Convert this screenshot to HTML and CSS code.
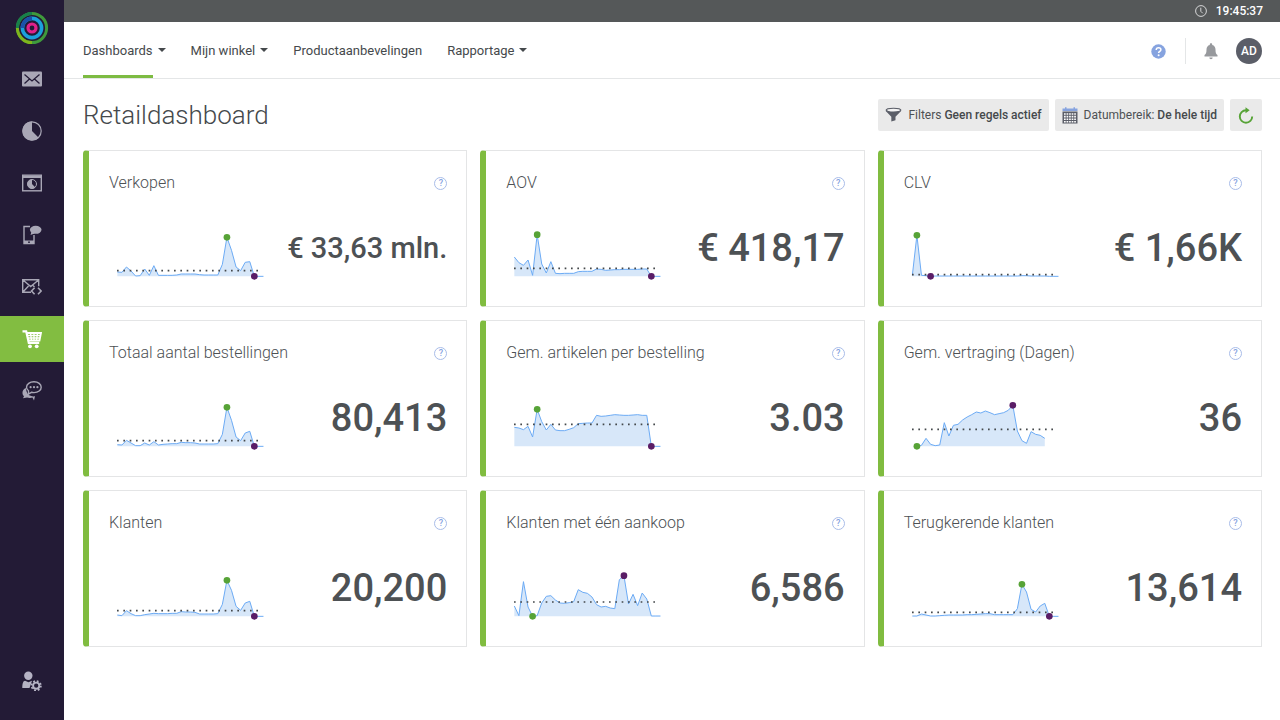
FILE: index.html
```html
<!DOCTYPE html>
<html lang="nl">
<head>
<meta charset="utf-8">
<title>Retaildashboard</title>
<link rel="stylesheet" href="styles.css">
</head>
<body>
<div class="app">
  <aside class="sidebar">
    <a class="logo" href="#" aria-label="Home">
      <svg width="34" height="34" viewBox="0 0 34 34" fill="none">
        <circle cx="17" cy="17" r="14.6" stroke="#3f9a3c" stroke-width="3"/>
        <path d="M2.4 17A14.6 14.6 0 0 1 17 2.4" stroke="#17804a" stroke-width="3"/>
        <path d="M2.4 17A14.6 14.6 0 0 0 17 31.6" stroke="#7fb51c" stroke-width="3"/>
        <circle cx="17" cy="17" r="9.6" stroke="#1ba0dc" stroke-width="3.6"/>
        <path d="M7.4 17A9.6 9.6 0 0 1 17 7.4" stroke="#1c51a8" stroke-width="3.6"/>
        <circle cx="17" cy="17" r="4" stroke="#e0218a" stroke-width="3.2"/>
      </svg>
    </a>
    <nav class="side-nav" aria-label="Hoofdmenu">
      <a class="side-link" href="#" aria-label="E-mail">
        <svg width="20" height="20" viewBox="0 0 20 20"><rect y="2.5" width="20" height="15" rx="1" fill="#a9a7b6"/><path d="M2.5 5.5l7.5 6.5 7.5-6.5M2.5 14.5l5-4.5M17.5 14.5l-5-4.5" stroke="#231b36" stroke-width="1.3" fill="none"/></svg>
      </a>
      <a class="side-link" href="#" aria-label="Analyse">
        <svg width="20" height="20" viewBox="0 0 20 20"><circle cx="10" cy="10" r="9.2" fill="none" stroke="#a9a7b6" stroke-width="1.2"/><path d="M10 10V.5A9.5 9.5 0 1 0 16.7 16.7z" fill="#a9a7b6"/></svg>
      </a>
      <a class="side-link" href="#" aria-label="Web">
        <svg width="20" height="20" viewBox="0 0 20 20" fill="none" stroke="#a9a7b6"><rect x=".7" y="2.2" width="18.6" height="15.6" stroke-width="1.4"/><path d="M1 4h18" stroke-width="2"/><circle cx="10" cy="11" r="4.5"/><path d="M10 11V6.2a4.8 4.8 0 1 0 3.4 8.2z" fill="#a9a7b6" stroke="none"/></svg>
      </a>
      <a class="side-link" href="#" aria-label="Mobiel">
        <svg width="20" height="20" viewBox="0 0 20 20"><path d="M8 1.5H2v17h10V10" fill="none" stroke="#a9a7b6" stroke-width="1.4"/><path d="M2 15.5h10V19H2z" fill="#a9a7b6"/><circle cx="7" cy="17.2" r=".9" fill="#231b36"/><ellipse cx="13.7" cy="4.8" rx="5.8" ry="4" fill="#a9a7b6"/><path d="M9.5 6.5l-1 3.5 4-1.5z" fill="#a9a7b6"/></svg>
      </a>
      <a class="side-link" href="#" aria-label="Transactionele e-mail">
        <svg width="20" height="20" viewBox="0 0 20 20" fill="none" stroke="#a9a7b6" stroke-width="1.4"><path d="M9 15.3H.7V2.7h16v6.5M1 3l7.7 6.5L16.500 3M1 15l5.500-6M11 8.500l1.500 1.500"/><path d="M12.600 10.700L9.500 14l3.100 3.300M16 10.700l3.100 3.300-3.100 3.300" stroke-width="1.6"/></svg>
      </a>
      <a class="side-link active" href="#" aria-label="Winkel" aria-current="page">
        <svg width="20" height="20" viewBox="0 0 20 20" fill="none" stroke="#fff"><path d="M.5 2.3h3.700l2.600 11.500h10.400" stroke-width="2.2"/><path d="M4.700 4H19l-1.500 7.500H6.500" stroke-width="1.8"/><path d="M5.500 6.500h13M6 9h12M8.500 4l1 7.500M12 4v7.500M15.500 4l-1 7.500" stroke-width="1.4"/><circle cx="8" cy="17.3" r="1.9" fill="#fff" stroke="none"/><circle cx="14.7" cy="17.3" r="1.9" fill="#fff" stroke="none"/></svg>
      </a>
      <a class="side-link" href="#" aria-label="Gesprekken">
        <svg width="20" height="20" viewBox="0 0 20 20"><path d="M4 7C0 8.500-.5 13 2 15.300L1 17.300l4-.8c2 .6 4 .5 5.500 0l1.500 3 1-4.200c-5 .7-9-2.500-9-8.300z" fill="#a9a7b6"/><path d="M12 .8c4.200 0 7.200 2.300 7.200 5.400s-3 5.400-7.200 5.400c-.9 0-1.700-.1-2.500-.3L6.500 13V9.800C5.200 8.800 4.500 7.600 4.500 6.200 4.500 3.100 7.800.8 12 .8z" fill="#231b36" stroke="#a9a7b6" stroke-width="1.4"/><circle cx="8.6" cy="6.2" r="1.1" fill="#a9a7b6"/><circle cx="12" cy="6.2" r="1.1" fill="#a9a7b6"/><circle cx="15.4" cy="6.2" r="1.1" fill="#a9a7b6"/></svg>
      </a>
    </nav>
    <a class="side-link settings" href="#" aria-label="Accountinstellingen">
      <svg width="20" height="20" viewBox="0 0 20 20"><circle cx="6.3" cy="4.8" r="4.2" fill="#b5b3c4"/><path d="M.3 17c0-5 1-7 2.700-7.300l3.500 1.500 3.500-1.500-2.500 7.300z" fill="#b5b3c4"/><circle cx="14.2" cy="14.7" r="3.1" fill="none" stroke="#b5b3c4" stroke-width="1.9"/><circle cx="14.2" cy="14.7" r="4.7" fill="none" stroke="#b5b3c4" stroke-width="1.7" stroke-dasharray="1.85 1.85"/></svg>
    </a>
  </aside>

  <div class="page">
    <div class="status-bar">
      <svg width="12" height="12" viewBox="0 0 12 12" fill="none" stroke="#d5d6d7"><circle cx="6" cy="6" r="5.4"/><path d="M5.800 2.700v3.600l2 2"/></svg>
      <time>19:45:37</time>
    </div>
    <header class="header">
      <nav class="tabs" aria-label="Winkelmenu">
        <a class="tab" href="#" aria-current="page"><span class="tab-label">Dashboards</span><span class="caret"></span></a>
        <a class="tab" href="#"><span class="tab-label">Mijn winkel</span><span class="caret"></span></a>
        <a class="tab" href="#"><span class="tab-label">Productaanbevelingen</span></a>
        <a class="tab" href="#"><span class="tab-label">Rapportage</span><span class="caret"></span></a>
      </nav>
      <div class="tools">
        <button class="tool help-tool" type="button" aria-label="Help">
          <svg width="15" height="15" viewBox="0 0 15 15"><circle cx="7.5" cy="7.5" r="7.2" fill="#86a3df"/><path d="M5.200 5.900c0-1.300 1-2.200 2.400-2.200S9.900 4.500 9.900 5.700c0 1.600-2.300 1.700-2.300 3.300" fill="none" stroke="#fff" stroke-width="1.5"/><circle cx="7.6" cy="11.2" r="1" fill="#fff"/></svg>
        </button>
        <button class="tool" type="button" aria-label="Meldingen">
          <svg width="14" height="17" viewBox="0 0 14 17" fill="#97999d"><path d="M7 .3c.8 0 1.200.5 1.200 1.200v.4c2.200.5 3.300 2.300 3.300 4.600 0 3.500.6 4.500 2 5.600v1.400H.5v-1.400c1.400-1.100 2-2.100 2-5.600 0-2.300 1.100-4.100 3.300-4.600v-.4C5.800.8 6.200.3 7 .3z"/><path d="M5.300 14.500h3.400a1.700 1.700 0 0 1-3.400 0z"/></svg>
        </button>
        <button class="avatar" type="button">AD</button>
      </div>
    </header>

    <main class="main">
      <div class="title-row">
        <h1 class="title">Retaildashboard</h1>
        <div class="actions">
          <button class="action" type="button">
            <svg width="17" height="16" viewBox="0 0 18 16"><path d="M.5 3.500l6.200 6.300V15l4.400-1.500V9.800l6.200-6.300z" fill="#5b5e68"/><ellipse cx="9" cy="2.8" rx="7.8" ry="2" fill="#f4f4f4" stroke="#5b5e68" stroke-width="1.2"/></svg>
            <span>Filters <b>Geen regels actief</b></span>
          </button>
          <button class="action" type="button">
            <svg width="16" height="17" viewBox="0 0 16 17"><path d="M.5 1.500h15V4H.5zM3 .3h1.500V3H3zM11.500.3H13V3h-1.500z" fill="#86a3df"/><rect x=".5" y="4.5" width="15" height="12" fill="#5b5e68"/><path d="M2 7h12M2 9.600h12M2 12.200h12M2 14.700h12" stroke="#fff" stroke-width="1.6" stroke-dasharray="1.7 .85"/></svg>
            <span>Datumbereik: <b>De hele tijd</b></span>
          </button>
          <button class="action refresh" type="button" aria-label="Vernieuwen">
            <svg width="16" height="17" viewBox="0 0 16 17"><path d="M9.500 3.300H8a6.200 6.200 0 1 0 6.200 6.200" fill="none" stroke="#57a337" stroke-width="1.9"/><path d="M7.500.3l4.200 3-4.200 3z" fill="#57a337"/></svg>
          </button>
        </div>
      </div>

      <section class="cards">
        <article class="card">
          <div class="card-head"><h2 class="card-title">Verkopen</h2><button class="hint" type="button" aria-label="Uitleg Verkopen">?</button></div>
          <div class="card-body">
            <svg class="spark" viewBox="0 0 450 156" data-values="13 12 28 16 1 2 22 3 32 3 3 3 3 4 7 7 7 7 5 4 4 4 4 36 117 78 28 17 42 44 0 0 0" data-average="17" data-green="24" data-purple="30"></svg>
            <p class="figure long">€ 33,63 mln.</p>
          </div>
        </article>
        <article class="card">
          <div class="card-head"><h2 class="card-title">AOV</h2><button class="hint" type="button" aria-label="Uitleg AOV">?</button></div>
          <div class="card-body">
            <svg class="spark" viewBox="0 0 450 156" data-values="58 41 33 49 3 125 37 10 44 9 8 9 9 9 14 15 15 15 22 21 18 19 20 20 21 21 21 21 22 22 0 0 0" data-average="24" data-green="5" data-purple="30"></svg>
            <p class="figure">€ 418,17</p>
          </div>
        </article>
        <article class="card">
          <div class="card-head"><h2 class="card-title">CLV</h2><button class="hint" type="button" aria-label="Uitleg CLV">?</button></div>
          <div class="card-body">
            <svg class="spark" viewBox="0 0 450 156" data-values="3 123 3 2 0 1 1 1 1 1 1 1 1 1 1 1 1 1 1 1 1 1 1 1 2 2 1 1 1 1 0 0 0" data-average="5" data-green="1" data-purple="4"></svg>
            <p class="figure">€ 1,66K</p>
          </div>
        </article>
        <article class="card">
          <div class="card-head"><h2 class="card-title">Totaal aantal bestellingen</h2><button class="hint" type="button" aria-label="Uitleg Totaal aantal bestellingen">?</button></div>
          <div class="card-body">
            <svg class="spark" viewBox="0 0 450 156" data-values="5 4 18 10 2 2 10 4 14 4 6 7 8 8 12 11 11 10 7 7 7 7 8 36 117 78 28 17 40 45 0 0 0" data-average="17" data-green="24" data-purple="30"></svg>
            <p class="figure">80,413</p>
          </div>
        </article>
        <article class="card">
          <div class="card-head"><h2 class="card-title">Gem. artikelen per bestelling</h2><button class="hint" type="button" aria-label="Uitleg Gem. artikelen per bestelling">?</button></div>
          <div class="card-body">
            <svg class="spark" viewBox="0 0 450 156" data-values="57 55 50 60 28 111 74 49 66 49 47 47 51 56 68 69 70 70 93 90 91 93 95 94 93 93 94 95 93 93 0 0 0" data-average="66" data-green="5" data-purple="30"></svg>
            <p class="figure">3.03</p>
          </div>
        </article>
        <article class="card">
          <div class="card-head"><h2 class="card-title">Gem. vertraging (Dagen)</h2><button class="hint" type="button" aria-label="Uitleg Gem. vertraging (Dagen)">?</button></div>
          <div class="card-body">
            <svg class="spark" viewBox="0 0 450 156" data-values="0 0 3 24 6 2 4 71 31 63 66 79 88 95 103 100 106 101 95 98 101 108 123 46 17 9 44 36 33 24" data-start="1" data-average="51" data-green="1" data-purple="22"></svg>
            <p class="figure">36</p>
          </div>
        </article>
        <article class="card">
          <div class="card-head"><h2 class="card-title">Klanten</h2><button class="hint" type="button" aria-label="Uitleg Klanten">?</button></div>
          <div class="card-body">
            <svg class="spark" viewBox="0 0 450 156" data-values="4 2 17 8 2 2 5 7 9 8 8 8 9 9 14 13 13 12 7 7 7 7 8 36 108 78 30 18 40 45 0 0 0" data-average="17" data-green="24" data-purple="30"></svg>
            <p class="figure">20,200</p>
          </div>
        </article>
        <article class="card">
          <div class="card-head"><h2 class="card-title">Klanten met één aankoop</h2><button class="hint" type="button" aria-label="Uitleg Klanten met één aankoop">?</button></div>
          <div class="card-body">
            <svg class="spark" viewBox="0 0 450 156" data-values="31 2 104 28 0 2 40 60 62 49 40 39 41 44 80 72 69 58 35 28 30 25 23 110 122 37 66 32 70 52 1 1 1" data-average="43" data-green="4" data-purple="24"></svg>
            <p class="figure">6,586</p>
          </div>
        </article>
        <article class="card">
          <div class="card-head"><h2 class="card-title">Terugkerende klanten</h2><button class="hint" type="button" aria-label="Uitleg Terugkerende klanten">?</button></div>
          <div class="card-body">
            <svg class="spark" viewBox="0 0 450 156" data-values="1 1 7 4 1 1 2 3 4 4 4 4 5 5 6 7 8 8 5 5 5 5 5 23 96 73 21 13 31 39 0 0 0" data-average="12" data-green="24" data-purple="30"></svg>
            <p class="figure">13,614</p>
          </div>
        </article>
      </section>
    </main>
  </div>
</div>
<script src="script.js"></script>
</body>
</html>
```
FILE: styles.css
```css
* {
  box-sizing: border-box;
}

body {
  margin: 0;
  background: #fff;
  color: #4d5154;
  font-family: Roboto, "Liberation Sans", sans-serif;
  font-size: 13px;
}

a {
  color: inherit;
  text-decoration: none;
}

button {
  margin: 0;
  padding: 0;
  border: 0;
  background: none;
  color: inherit;
  font: inherit;
  cursor: pointer;
}

.app {
  display: flex;
  min-height: 100vh;
}

.sidebar {
  display: flex;
  flex-direction: column;
  flex: 0 0 64px;
  padding-bottom: 16px;
  background: #231b36;
}

.logo {
  display: flex;
  align-items: center;
  justify-content: center;
  height: 56px;
}

.side-nav {
  display: flex;
  flex-direction: column;
  gap: 6px;
}

.side-link {
  display: flex;
  align-items: center;
  justify-content: center;
  height: 46px;
}

.side-link.active {
  background: #82bd41;
}

.settings {
  margin-top: auto;
}

.page {
  display: flex;
  flex-direction: column;
  flex: 1;
  min-width: 0;
}

.status-bar {
  display: flex;
  align-items: center;
  justify-content: flex-end;
  gap: 9px;
  height: 22px;
  padding: 0 17px;
  background: #555859;
  color: #fff;
  font-size: 12px;
  font-weight: 500;
}

.header {
  display: flex;
  justify-content: space-between;
  height: 57px;
  padding: 0 18px 0 19px;
  border-bottom: 1px solid #e4e6e7;
}

.tabs {
  display: flex;
  gap: 25px;
}

.tab {
  display: flex;
  align-items: center;
  gap: 5px;
  color: #45494c;
}

.tab-label {
  display: flex;
  align-items: center;
  height: 100%;
  padding-top: 1px;
  border-top: 3px solid transparent;
  border-bottom: 3px solid transparent;
}

.tab[aria-current] .tab-label {
  border-bottom-color: #7dbb42;
}

.caret {
  border: 4px solid transparent;
  border-top-color: #45494c;
  border-bottom: 0;
}

.tools {
  display: flex;
  align-items: center;
  gap: 18px;
  padding-top: 2px;
}

.tool {
  display: flex;
  align-items: center;
}

.help-tool {
  height: 26px;
  padding-right: 19px;
  border-right: 1px solid #e4e6e7;
}

.avatar {
  width: 26px;
  height: 26px;
  border-radius: 50%;
  background: #5b5e68;
  color: #fff;
  font-size: 12px;
  font-weight: 500;
}

.main {
  padding: 20px 18px 19px 19px;
}

.title-row {
  display: flex;
  align-items: center;
  justify-content: space-between;
  margin-bottom: 19px;
}

.title {
  margin: 0;
  color: #45494c;
  font-size: 26px;
  font-weight: 300;
  line-height: 32px;
}

.actions {
  display: flex;
  gap: 6px;
}

.action {
  display: flex;
  align-items: center;
  gap: 6px;
  height: 32px;
  padding: 0 7px;
  border-radius: 2px;
  background: #eaeaea;
  font-size: 12px;
}

.action b {
  font-weight: 500;
  color: #45494c;
}

.action.refresh {
  padding: 0 8px;
}

.cards {
  display: grid;
  grid-template-columns: repeat(3, minmax(0, 1fr));
  gap: 13px;
}

.card {
  padding: 23px 19px 24px 20px;
  border: 1px solid #e4e5e6;
  border-left: 6px solid #80bc40;
  border-radius: 4px 0 0 4px;
}

.card-head {
  display: flex;
  align-items: center;
  justify-content: space-between;
}

.card-title {
  margin: 0;
  color: #4d5154;
  font-size: 16px;
  font-weight: 300;
  line-height: 18px;
}

.hint {
  width: 13px;
  height: 13px;
  border: 1px solid #a9bde9;
  border-radius: 50%;
  color: #86a3df;
  font-size: 9px;
  font-weight: 500;
  line-height: 11px;
}

.card-body {
  display: flex;
  align-items: flex-start;
  justify-content: space-between;
  padding: 38px 0 0 6px;
}

.spark {
  flex: none;
  width: 150px;
  height: 52px;
}

.spark-area {
  fill: #d7e7f9;
}

.spark-line {
  fill: none;
  stroke: #6cabf5;
  stroke-width: 3;
  stroke-linejoin: round;
}

.spark-average {
  stroke: #44484b;
  stroke-width: 5;
  stroke-dasharray: 5 14;
}

.spark-green {
  fill: #57a337;
}

.spark-purple {
  fill: #5a1d66;
}

.figure {
  margin: 0;
  font-size: 38px;
  font-weight: 500;
  line-height: 36px;
  white-space: nowrap;
}

.figure.long {
  font-size: 29px;
}
```
FILE: script.js
```js
const NS = "http://www.w3.org/2000/svg";
const LEFT = 7;
const STEP = 13.7;
const BASE = 139;

function add(svg, name, attributes) {
  const node = document.createElementNS(NS, name);
  for (const key in attributes) node.setAttribute(key, attributes[key]);
  svg.appendChild(node);
}

document.querySelectorAll(".spark").forEach((svg) => {
  const { values, start = "0", average, green, purple } = svg.dataset;
  const heights = values.split(" ").map(Number);
  const x = (i) => LEFT + STEP * i;
  const first = Number(start);
  const line = heights
    .map((h, i) => `${x(i)},${BASE - h}`)
    .slice(first)
    .join(" ");

  add(svg, "polygon", {
    class: "spark-area",
    points: `${x(first)},${BASE} ${line} ${x(heights.length - 1)},${BASE}`
  });
  add(svg, "polyline", { class: "spark-line", points: line });
  add(svg, "line", {
    class: "spark-average",
    x1: LEFT - 1, x2: 440, y1: BASE - average, y2: BASE - average
  });
  add(svg, "circle", { class: "spark-green", cx: x(green), cy: BASE - heights[green], r: 10 });
  add(svg, "circle", { class: "spark-purple", cx: x(purple), cy: BASE - heights[purple], r: 10 });
});
```
